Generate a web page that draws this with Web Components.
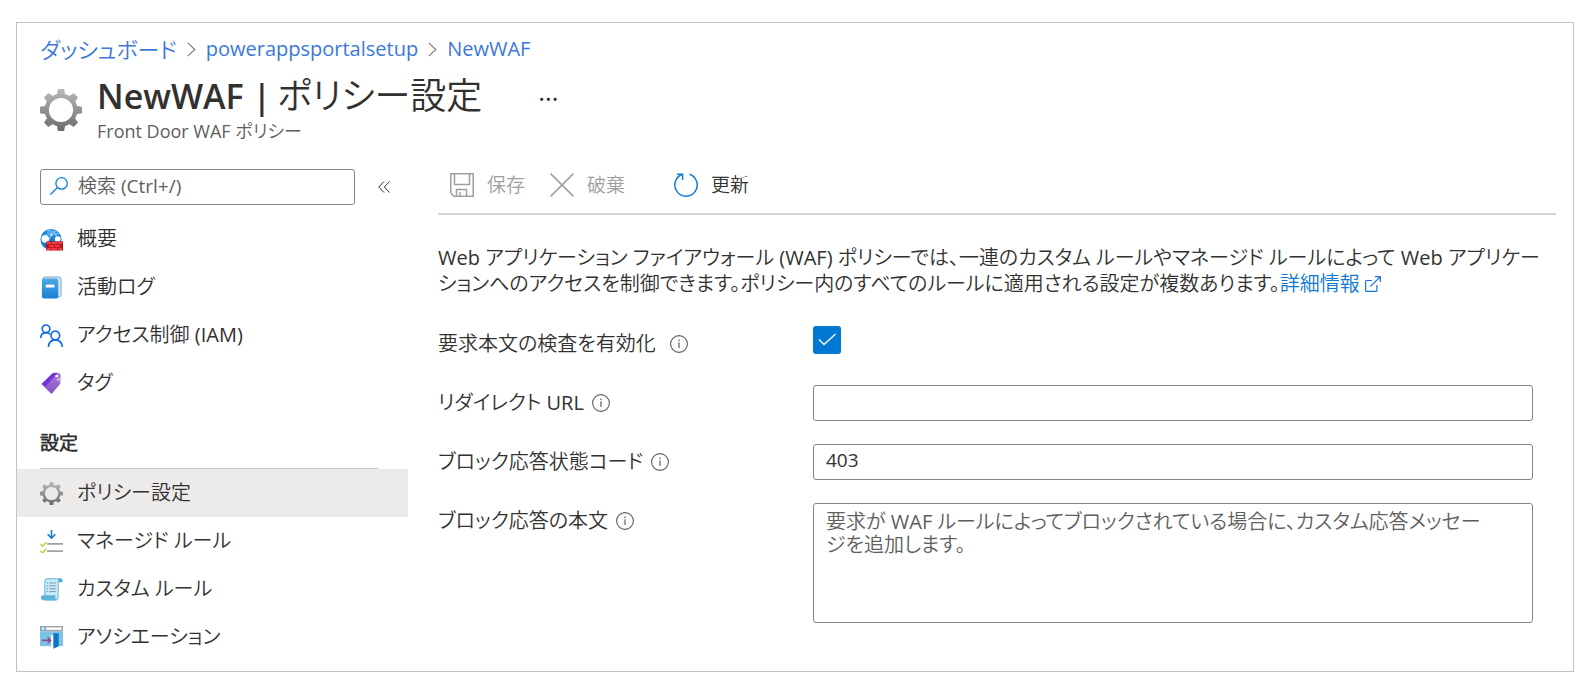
<!DOCTYPE html>
<html lang="ja">
<head>
<meta charset="utf-8">
<meta name="viewport" content="width=device-width, initial-scale=1">
<title>NewWAF | ポリシー設定</title>
<style>
  body {
    margin: 0;
    background: #fff;
    color: #323130;
    font: 20px/26px "Open Sans", "Noto Sans CJK JP DemiLight", "Noto Sans CJK JP", sans-serif;
    font-feature-settings: "palt";
  }
</style>
</head>
<body>
<portal-frame>
  <bread-crumbs slot="header"></bread-crumbs>
  <blade-title slot="header" name="NewWAF" page="ポリシー設定">Front Door WAF ポリシー</blade-title>

  <nav-search slot="menu"></nav-search>
  <nav-item slot="menu" icon="waf">概要</nav-item>
  <nav-item slot="menu" icon="log">活動ログ</nav-item>
  <nav-item slot="menu" icon="people">アクセス制御 (IAM)</nav-item>
  <nav-item slot="menu" icon="tag">タグ</nav-item>
  <nav-heading slot="menu">設定</nav-heading>
  <nav-item slot="menu" icon="gear" selected>ポリシー設定</nav-item>
  <nav-item slot="menu" icon="managed">マネージド ルール</nav-item>
  <nav-item slot="menu" icon="scroll">カスタム ルール</nav-item>
  <nav-item slot="menu" icon="assoc">アソシエーション</nav-item>

  <tool-bar>
    <tool-button icon="save" disabled>保存</tool-button>
    <tool-button icon="discard" disabled>破棄</tool-button>
    <tool-button icon="refresh" apart>更新</tool-button>
  </tool-bar>
  <policy-intro></policy-intro>
  <form-fields>
    <check-field label="要求本文の検査を有効化"></check-field>
    <text-field label="リダイレクト URL"></text-field>
    <text-field label="ブロック応答状態コード" value="403"></text-field>
    <area-field label="ブロック応答の本文" placeholder="要求が WAF ルールによってブロックされている場合に、カスタム応答メッセージを追加します。"></area-field>
  </form-fields>
</portal-frame>

<script>
const teeth = [0, 45, 90, 135, 180, 225, 270, 315]
  .map(a => `<path d="M10.2 0h3.6l.8 4.4h-5.2z" transform="rotate(${a} 12 12)"/>`).join('');

const ICONS = {
  gear: `<svg viewBox="0 0 24 24"><defs><linearGradient id="g" gradientUnits="userSpaceOnUse" x1="0" y1="0" x2="0" y2="24"><stop offset="0" stop-color="#b8b9ba"/><stop offset="1" stop-color="#6a6b6d"/></linearGradient>
    <mask id="m"><g fill="#fff"><circle cx="12" cy="12" r="9.4"/>${teeth}</g><circle cx="12" cy="12" r="6.9" fill="#000"/></mask></defs>
    <rect width="24" height="24" fill="url(#g)" mask="url(#m)"/></svg>`,
  waf: `<svg viewBox="0 0 24 24"><defs><linearGradient id="b" x1="0" y1="0" x2="0" y2="1"><stop offset="0" stop-color="#1a86dd"/><stop offset="1" stop-color="#1672c8"/></linearGradient></defs>
    <circle cx="11.5" cy="12" r="11" fill="url(#b)"/><path d="M7 2c5 1 9 4 12 9M2 9c6-3 12-4 18-3M9 12c3-5 4-7 8-9" stroke="#7cc1f5" stroke-width="1.5" fill="none"/>
    <path d="M8 3q4-2 8 0l-3 5q-5 0-7-1z" fill="#5fb0f0" opacity=".8"/><circle cx="5.5" cy="11.5" r="4" fill="#fff"/><circle cx="18.5" cy="11.5" r="3" fill="#fff"/><circle cx="12" cy="7" r="1.6" fill="#a8d8fa"/>
    <path d="M6.5 14h17.5v9.500H6.500z" fill="#b11016"/><g fill="#ef3b42"><path d="M7.200 14.600h4v2.300h-4zM12 14.600h6v2.300h-6zM19 14.600h4.300v2.300H19zM9.500 17.700h5v2.200h-5zM15.500 17.700h5v2.200h-5zM7.200 20.700h4v2.200h-4zM12 20.700h6v2.200h-6zM19 20.700h4.300v2.200H19z"/></g></svg>`,
  log: `<svg viewBox="0 0 24 24"><defs><linearGradient id="l" x1="0" y1="0" x2="0" y2="1"><stop offset="0" stop-color="#4aa9e4"/><stop offset="1" stop-color="#1b80d2"/></linearGradient></defs>
    <path d="M5 1h15q2 0 2 2v17q0 2-2 2h-2V3H3q0-2 2-2z" fill="#cfe6f5" stroke="#5b9cca" stroke-width=".8"/><path d="M2 4q0-1 2-1h13q2 0 2 2v17q0 1.500-2 1.500H4q-2 0-2-2z" fill="url(#l)"/><path d="M6 9h9v3H6z" fill="#fff"/></svg>`,
  people: `<svg viewBox="0 0 24 24" fill="none" stroke="#0f6be0" stroke-width="1.700"><circle cx="6.300" cy="5" r="4"/><circle cx="16" cy="12" r="4.500"/><path d="M.8 14.500q0-5.300 5.500-5.500 2.700 0 4.200 1.800M8.800 24q.4-7.200 7.200-7.400 6.800.2 7.200 7.400"/></svg>`,
  tag: `<svg viewBox="0 0 24 24"><defs><linearGradient id="t" x1="0" y1="0" x2="0" y2="1"><stop offset="0" stop-color="#a57ad6"/><stop offset="1" stop-color="#8550c4"/></linearGradient></defs>
    <path d="M2 13 13 2q1-1 3-1h3q2.500 0 2.500 2.500v7q0 1.600-1 2.600L12 23z" fill="url(#t)"/><path d="M1.500 12.500 12.500 1.700q1-.9 2.500-.9h3.500L5.500 15.500z" fill="#6f35d6"/><circle cx="17.500" cy="4.300" r="1.500" fill="#fff"/><path d="M18.300 9q0-2 2-2t1.700 1.500q-.2 1.500-1.700 1.500" stroke="#efe5fa" stroke-width="1.200" fill="none"/></svg>`,
  managed: `<svg viewBox="0 0 24 24" fill="none"><path d="M12 0v8M8 4.500l4 4 4-4" stroke="#0f78d0" stroke-width="1.600"/><path d="M7.500 14.500H24M7.500 22H24" stroke="#a0a2a5" stroke-width="1.700"/><path d="M.5 14.500 2.700 17l3.800-4.500M.5 21.500 2.700 24l3.800-4.500" stroke="#a9d21c" stroke-width="1.300"/></svg>`,
  scroll: `<svg viewBox="0 0 24 24"><path d="M7 .8h14.500q1.500.2 1.500 2V4H19v16q0 3-2.500 3H4.500L5 18V4q0-3 2-3.200z" fill="#c9e9f7" stroke="#5cb6dc" stroke-width="1"/><path d="M19 4V2.500q0-2 2-2t2.200 2V4z" fill="#4aa9d4"/><path d="M3 18h13v2.200q0 3 2 3H3.500Q1 23 1 20.500T3 18z" fill="#5ab4da"/><path d="M9.500 5.200h7M9.500 8.200h7M9.500 11.200h7M9.500 14.200h7" stroke="#7b98ab"/><path d="M7 5.200h1.200M7 8.200h1.200M7 11.200h1.200M7 14.200h1.200" stroke="#3f91c4"/></svg>`,
  assoc: `<svg viewBox="0 0 24 24"><path d="M0 5.500h24V21H0z" fill="#7cc4e4"/><path d="M0 0h24v5.500H0z" fill="#a1a3a6"/><path d="M6.500 1.500h16v2.500h-16z" fill="#fff"/><circle cx="3.200" cy="2.800" r="2" fill="#d7f0fb" stroke="#58b4dc"/><path d="M11.500 9.500H14V21h-2.500z" fill="#fff"/><path d="M14 7.500h5.500V21L14 23.800z" fill="#1072c8"/><path d="M2 14h6v-3l4.200 4L8 19v-3H2z" fill="#8a4b9f"/></svg>`,
  save: `<svg viewBox="0 0 24 24" fill="none" stroke="#a19f9d" stroke-width="1.500"><path d="M.8.8h22.400v22.400H4L.8 20z"/><path d="M4.500 1v10.500h15V1M6.500 23v-6.500h10V23M10 19v4"/></svg>`,
  discard: `<svg viewBox="0 0 24 24" fill="none" stroke="#a19f9d" stroke-width="1.500"><path d="m.6.600 22.800 22.800M23.400.600.600 23.400"/></svg>`,
  refresh: `<svg viewBox="0 0 24 24" fill="none" stroke="#0f7ddb" stroke-width="1.500"><path d="M15.500 1.300A11.200 11.200 0 1 1 8 1.500"/><path d="M3 1.200h5.600V7"/></svg>`,
  info: `<svg viewBox="0 0 18 18" fill="none" stroke="#605e5c"><circle cx="9" cy="9" r="8.400" stroke-width="1.100"/><path d="M9 7.300V13" stroke-width="1.200"/><path d="M9 4.500v1.400" stroke-width="1.300"/></svg>`,
  search: `<svg viewBox="0 0 18 18" fill="none" stroke="#0f7ddb" stroke-width="1.300"><circle cx="11.600" cy="6.400" r="5.700"/><path d="M7.500 10.500.4 17.600"/></svg>`,
  collapse: `<svg viewBox="0 0 12 12" fill="none" stroke="#323130" stroke-width="1"><path d="M6 .5.800 6 6 11.500M11.500.5 6.300 6l5.200 5.500"/></svg>`,
  chevron: `<svg viewBox="0 0 9 15" fill="none" stroke="#797775" stroke-width="1.100"><path d="m.8.8 7 6.700-7 6.700"/></svg>`,
  external: `<svg viewBox="0 0 16 16" fill="none" stroke="#1a73e0" stroke-width="1.200"><path d="M7 4.500H1.500q-.9 0-.9.900v9q0 .9.900.9h9.500q.9 0 .9-.9V9M5.500 10.500 15.300.700M10 .700h5.300V6"/></svg>`
};

class Base extends HTMLElement {
  connectedCallback() {
    if (this.shadowRoot) return;
    this.attachShadow({ mode: 'open' }).innerHTML = this.render();
  }
  attr(name) { return this.getAttribute(name) || ''; }
}
const RESET = `*{box-sizing:border-box} a{color:inherit;text-decoration:none}
  button,input,textarea{font:inherit;font-feature-settings:inherit;color:inherit;margin:0}
  button{background:none;border:0;padding:0}`;
const define = (name, render) =>
  customElements.define(name, class extends Base { render() { return render(this); } });

define('ui-icon', el => `<style>:host{display:inline-block;flex:none;width:24px;height:24px} svg{display:block;width:100%;height:100%}</style>${ICONS[el.attr('name')]}`);

define('portal-frame', () => `<style>${RESET}
  :host{display:block;box-sizing:border-box;margin:22px 18px 25px 16px;border:1px solid #c3c3c3;padding-bottom:10px}
  header{padding:13px 23px 0}
  .body{display:grid;grid-template-columns:391px minmax(0,1fr);column-gap:30px}
  main{padding-top:20px}
</style><header><slot name="header"></slot></header>
<div class="body"><nav><slot name="menu"></slot></nav><main><slot></slot></main></div>`);

define('bread-crumbs', () => `<style>${RESET}
  :host{display:block;color:#3b78d8}
  nav{display:flex;align-items:center;gap:10px}
  .root{font-size:22px}
  ui-icon{width:9px;height:15px}
</style><nav><a class="root" href="#">ダッシュボード</a><ui-icon name="chevron"></ui-icon><a href="#">powerappsportalsetup</a><ui-icon name="chevron"></ui-icon><a href="#">NewWAF</a></nav>`);

define('blade-title', el => `<style>${RESET}
  :host{display:flex;align-items:flex-end;gap:15px;margin-top:9px}
  ui-icon{width:42px;height:42px;margin-bottom:16px}
  .line{display:flex;align-items:center;gap:56px}
  h1{display:flex;gap:6px;margin:0;font-size:36px;line-height:50px;font-weight:300}
  b{font-size:34px;font-weight:600}
  button{font-size:26px;line-height:26px;padding-bottom:10px}
  p{margin:0 0 6px;font-size:18px;line-height:20px;color:#605e5c}
</style><ui-icon name="gear"></ui-icon>
<div><div class="line"><h1><b>${el.attr('name')} |</b><span>${el.attr('page')}</span></h1><button aria-label="その他">…</button></div><p><slot></slot></p></div>`);

define('nav-search', () => `<style>${RESET}
  :host{display:flex;align-items:center;gap:23px;padding:22px 0 10px 23px}
  label{display:flex;align-items:center;gap:10px;width:315px;height:36px;padding:0 9px 2px;border:1px solid #858381;border-radius:3px}
  ui-icon{width:18px;height:18px}
  input{flex:1;min-width:0;border:0;padding:0;height:30px;font-size:19px;background:none;outline:0}
  input::placeholder{color:#605e5c;opacity:1}
  button ui-icon{display:block;width:12px;height:12px}
</style><label><ui-icon name="search"></ui-icon><input type="search" aria-label="検索" placeholder="検索 (Ctrl+/)"></label>
<button aria-label="折りたたむ"><ui-icon name="collapse"></ui-icon></button>`);

define('nav-item', el => `<style>${RESET}
  :host{display:block} :host([selected]){background:#edebe9}
  a{display:flex;align-items:center;gap:14px;height:48px;padding-left:23px}
  ui-icon{width:23px;height:23px}
</style><a href="#"${el.hasAttribute('selected') ? ' aria-current="page"' : ''}><ui-icon name="${el.attr('icon')}"></ui-icon><span><slot></slot></span></a>`);

define('nav-heading', () => `<style>
  :host{display:block;padding:0 30px 0 23px}
  h2{margin:0;border-bottom:1px solid #c8c6c4;padding:23px 0 12px;font-size:19px;line-height:26px;font-weight:700}
</style><h2><slot></slot></h2>`);

define('tool-bar', () => `<style>
  :host{display:flex;gap:25px;margin-right:17px;padding:0 12px 10px;border-bottom:2px solid #d6d5d4}
</style><slot></slot>`);

define('tool-button', el => `<style>${RESET}
  :host{display:block} :host([apart]){padding-left:24px}
  button{display:flex;align-items:center;gap:13px;height:36px;font-size:19px}
  button:disabled{color:#a19f9d}
</style><button${el.hasAttribute('disabled') ? ' disabled' : ''}><ui-icon name="${el.attr('icon')}"></ui-icon><span><slot></slot></span></button>`);

define('policy-intro', () => `<style>${RESET}
  :host{display:block;margin:30px 24px 29px 0}
  p{margin:0} a{color:#0f78d4} ui-icon{width:16px;height:16px;margin-left:5px;vertical-align:-1px}
</style><p>Web アプリケーション ファイアウォール (WAF) ポリシーでは、一連のカスタム ルールやマネージド ルールによって Web アプリケーションへのアクセスを制御できます。ポリシー内のすべてのルールに適用される設定が複数あります。<a href="#">詳細情報<ui-icon name="external"></ui-icon></a></p>`);

define('form-fields', () => `<style>
  :host{display:flex;flex-direction:column;gap:23px;margin-right:40px}
</style><slot></slot>`);

const FIELD = `${RESET}
  :host{display:grid;grid-template-columns:375px minmax(0,1fr);align-items:start}
  .label{display:flex;align-items:center;gap:8px;height:36px}
  ui-icon{width:18px;height:18px}
  input,textarea{display:block;width:100%;border:1px solid #858381;border-radius:3px;padding:0 12px;background:#fff;outline:0}
  ::placeholder{color:#605e5c;opacity:1}`;
const fieldLabel = el => `<div class="label"><label for="control">${el.attr('label')}</label><ui-icon name="info"></ui-icon></div>`;

define('text-field', el => `<style>${FIELD} input{height:36px;padding-bottom:4px;font-size:19px}</style>${fieldLabel(el)}<input id="control" type="text" value="${el.attr('value')}">`);
define('area-field', el => `<style>${FIELD} textarea{height:120px;padding:6px 36px 6px 12px;line-height:23px;resize:none}</style>${fieldLabel(el)}<textarea id="control" placeholder="${el.attr('placeholder')}"></textarea>`);
define('check-field', el => `<style>${FIELD}
  .label{gap:14px}
  .box{display:grid;width:28px;height:28px}
  .box>*{grid-area:1/1}
  input{appearance:none;width:28px;height:28px;padding:0;border:0}
  input:checked{background:#0078d4}
  svg{pointer-events:none;z-index:1}
</style>${fieldLabel(el)}<div class="box"><input id="control" type="checkbox" checked><svg viewBox="0 0 28 28" fill="none" stroke="#fff" stroke-width="1.300"><path d="m6 13.500 5 5L22.500 8"/></svg></div>`);
</script>
</body>
</html>
